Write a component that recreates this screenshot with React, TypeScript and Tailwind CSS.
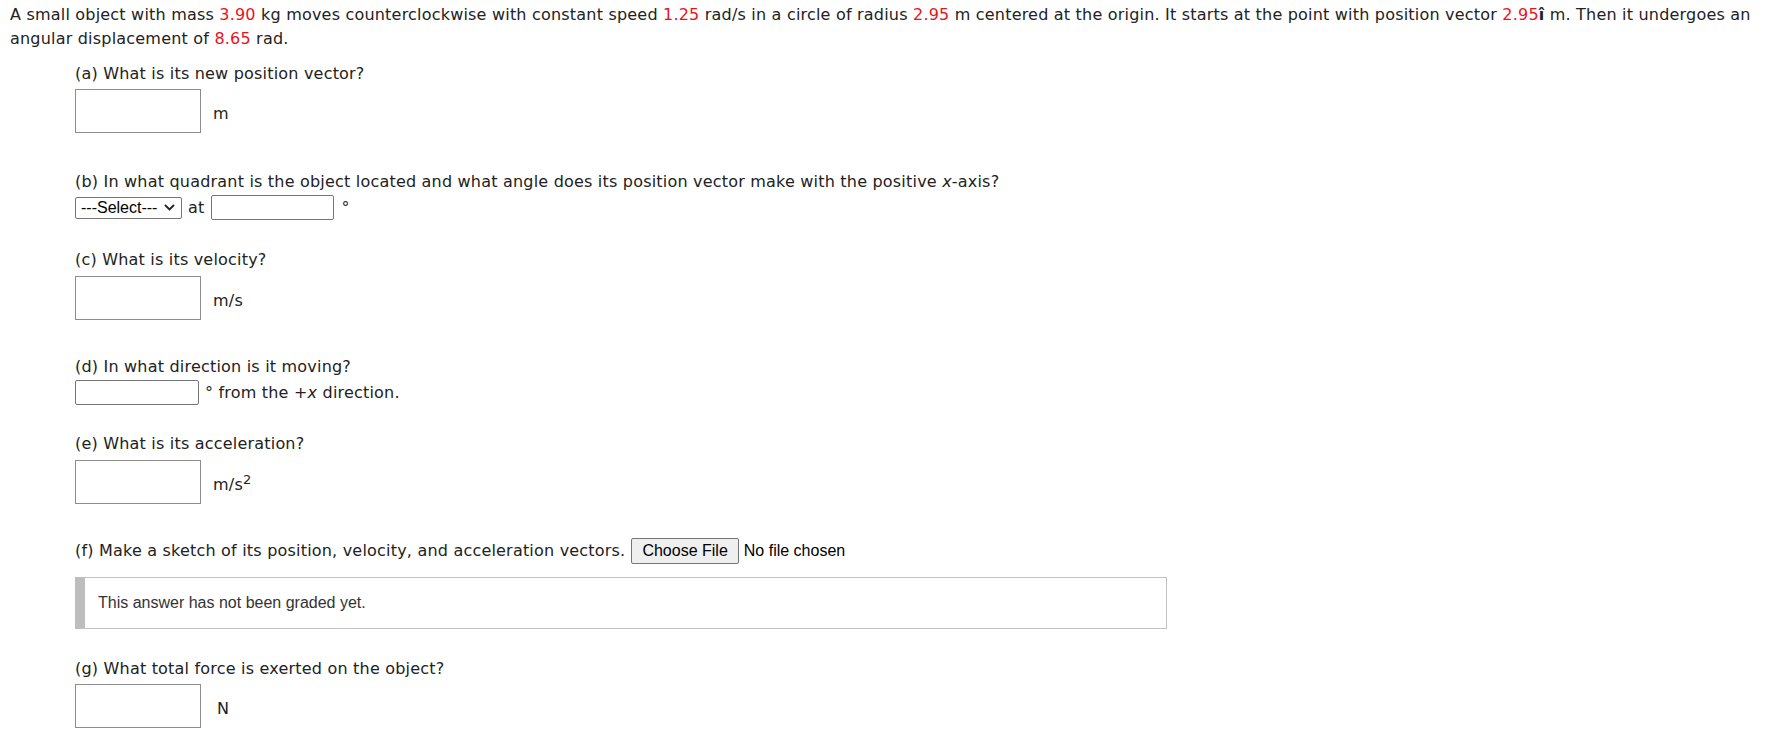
import React from "react";

const red = "text-[#e8141b]";

function Num({ children }: { children: React.ReactNode }) {
  return <span className={red}>{children}</span>;
}

function BigInput() {
  return (
    <input
      type="text"
      className="h-[44px] w-[126px] border border-[#8c8c8c] bg-white px-1 outline-none"
    />
  );
}

function SmallInput({ w }: { w: string }) {
  return (
    <input
      type="text"
      className={`h-[25px] ${w} rounded-[2px] border border-[#767676] bg-white px-1 outline-none`}
    />
  );
}

export default function App() {
  return (
    <div className="min-h-screen bg-white pl-[10px] pr-[8px] pt-[3px] text-[16px] leading-[24px] tracking-[0.2px] text-[#222] [font-family:'DejaVu_Sans',Verdana,sans-serif]">
      <p>
        A small object with mass <Num>3.90</Num> kg moves counterclockwise with constant speed <Num>1.25</Num> rad/s
        in a circle of radius <Num>2.95</Num> m centered at the origin. It starts at the point with position vector{" "}
        <Num>2.95</Num>
        <b>î</b> m. Then it undergoes an angular displacement of <Num>8.65</Num> rad.
      </p>

      <div className="ml-[65px]">
        {/* (a) */}
        <div className="mt-[11px]">(a) What is its new position vector?</div>
        <div className="mt-[3px] flex items-center">
          <BigInput />
          <span className="ml-[12px] pt-[6px]">m</span>
        </div>

        {/* (b) */}
        <div className="mt-[37px]">
          (b) In what quadrant is the object located and what angle does its position vector make with the positive{" "}
          <i>x</i>-axis?
        </div>
        <div className="mt-[1px] flex h-[25px] items-center">
          <div className="flex h-[22px] w-[107px] items-center justify-between rounded-[2px] border border-[#767676] bg-white pl-[5px] pr-[6px] text-[16px] tracking-normal text-black [font-family:'Liberation_Sans',Arial,sans-serif]">
            <span>---Select---</span>
            <svg width="11" height="7" viewBox="0 0 11 7" fill="none" stroke="#222" strokeWidth="1.8">
              <path d="M1 1l4.5 4.5L10 1" />
            </svg>
          </div>
          <span className="ml-[6px]">at</span>
          <span className="ml-[7px] flex">
            <SmallInput w="w-[123px]" />
          </span>
          <span className="ml-[7px]">°</span>
        </div>

        {/* (c) */}
        <div className="mt-[28px]">(c) What is its velocity?</div>
        <div className="mt-[4px] flex items-center">
          <BigInput />
          <span className="ml-[12px] pt-[6px]">m/s</span>
        </div>

        {/* (d) */}
        <div className="mt-[35px]">(d) In what direction is it moving?</div>
        <div className="mt-[1px] flex items-center">
          <SmallInput w="w-[124px]" />
          <span className="ml-[6px]">
            ° from the +<i>x</i> direction.
          </span>
        </div>

        {/* (e) */}
        <div className="mt-[27px]">(e) What is its acceleration?</div>
        <div className="mt-[4px] flex items-center">
          <BigInput />
          <span className="ml-[12px] pt-[6px]">
            m/s<sup className="text-[13px]">2</sup>
          </span>
        </div>

        {/* (f) */}
        <div className="mt-[34px] flex h-[26px] items-center">
          <span>(f) Make a sketch of its position, velocity, and acceleration vectors.</span>
          <span className="ml-[6px] flex h-[26px] items-center rounded-[2px] border border-[#767676] bg-[#efefef] px-[10px] text-[16px] tracking-normal text-black [font-family:'Liberation_Sans',Arial,sans-serif]">
            Choose File
          </span>
          <span className="ml-[5px] text-[16px] tracking-normal text-black [font-family:'Liberation_Sans',Arial,sans-serif]">
            No file chosen
          </span>
        </div>

        <div className="mt-[13px] flex h-[52px] w-[1092px] items-center border border-l-[10px] border-[#c2c2c2] border-l-[#bdbdbd] bg-white pl-[13px] text-[16px] leading-normal tracking-normal text-[#333] [font-family:'Liberation_Sans',Arial,sans-serif]">
          This answer has not been graded yet.
        </div>

        {/* (g) */}
        <div className="mt-[28px]">(g) What total force is exerted on the object?</div>
        <div className="mt-[3px] flex items-center">
          <BigInput />
          <span className="ml-[16px] pt-[6px]">N</span>
        </div>
      </div>
    </div>
  );
}
